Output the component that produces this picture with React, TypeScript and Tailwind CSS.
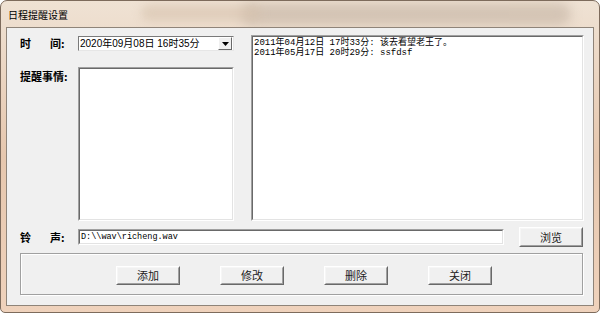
import React from 'react';

const cjk = '"Noto Sans CJK SC", "Liberation Sans", sans-serif';
const mono = '"Liberation Mono", "Noto Sans CJK SC", monospace';

function Sunken({ className, children }: { className: string; children?: React.ReactNode }) {
  return (
    <div className={`border border-t-[#a0a0a0] border-l-[#a0a0a0] border-r-white border-b-white ${className}`}>
      <div className="w-full h-full border border-t-[#696969] border-l-[#696969] border-r-[#e3e3e3] border-b-[#e3e3e3] bg-white overflow-hidden">
        {children}
      </div>
    </div>
  );
}

function Button({ label, className = '' }: { label: string; className?: string }) {
  return (
    <div
      className={`border border-t-white border-l-white border-r-[#696969] border-b-[#696969] ${className}`}
    >
      <div
        className="w-full h-full border border-t-[#f6f6f6] border-l-[#f6f6f6] border-r-[#a0a0a0] border-b-[#a0a0a0] bg-[#f0f0f0] flex items-center justify-center text-[11px] text-[#202020]"
        style={{ fontFamily: cjk }}
      >
        {label}
      </div>
    </div>
  );
}

export default function App() {
  const reminders = ['2011年04月12日 17时33分: 该去看望老王了。', '2011年05月17日 20时29分: ssfdsf'];

  return (
    <div className="w-[600px] h-[313px] overflow-hidden bg-white">
      <div className="relative w-[600px] h-[313px] rounded-t-[7px] rounded-b-[5px] border border-[#7d6b5c] bg-gradient-to-b from-[#efe2d4] via-[#e6c7ae] to-[#efd2bc] flex flex-col overflow-hidden">
        {/* blurred background behind the aero title bar */}
        <div className="absolute left-[240px] top-[2px] w-[330px] h-[22px] bg-[#b9a898] opacity-50 blur-[6px] rounded-full" />
        <div className="absolute left-[140px] top-[4px] w-[120px] h-[16px] bg-[#d6c2ad] opacity-60 blur-[5px] rounded-full" />

        <div className="relative h-[26px] shrink-0 flex items-center pl-[7px]">
          <span className="text-[10px] text-black tracking-[0px]" style={{ fontFamily: cjk }}>
            日程提醒设置
          </span>
        </div>

        <div className="relative mx-[5px] mb-[6px] flex-1 border border-[#8f8479] bg-[#f0f0f0] pl-[13px] pr-[8px] pt-[7px]">
          <div className="flex">
            {/* left column */}
            <div className="flex flex-col">
              <div className="flex items-center mt-[1px] h-[15px]">
                <div
                  className="w-[58px] flex text-[11px] font-bold text-black leading-none"
                  style={{ fontFamily: cjk }}
                >
                  <span className="w-[30px]">时</span>
                  <span>间:</span>
                </div>
                <div className="w-[156px] h-[15px] border border-t-[#7a7a7a] border-l-[#7a7a7a] border-r-[#e6e6e6] border-b-[#e6e6e6] bg-white flex items-center">
                  <span
                    className="flex-1 pl-[1px] text-[10px] text-black leading-none whitespace-pre"
                    style={{ fontFamily: '"Liberation Sans", "Noto Sans CJK SC", sans-serif' }}
                  >
                    2020年09月08日 16时35分
                  </span>
                  <div className="w-[14px] h-[13px] mr-px border border-t-white border-l-white border-r-[#696969] border-b-[#696969] bg-[#f0f0f0] flex items-center justify-center">
                    <svg width="7" height="4" viewBox="0 0 7 4">
                      <path d="M0 0h7L3.5 4z" fill="#000" />
                    </svg>
                  </div>
                </div>
              </div>

              <div className="flex mt-[16px]">
                <div
                  className="w-[58px] pt-[4px] text-[11px] font-bold text-black leading-none"
                  style={{ fontFamily: cjk }}
                >
                  提醒事情:
                </div>
                <Sunken className="w-[156px] h-[154px]" />
              </div>
            </div>

            {/* reminder list */}
            <Sunken className="ml-[17px] w-[333px] h-[186px]">
              <div className="pl-[1px] pt-[1px] text-[9px] leading-[10px] text-black" style={{ fontFamily: mono }}>
                {reminders.map((r) => (
                  <div key={r} className="whitespace-pre">
                    {r}
                  </div>
                ))}
              </div>
            </Sunken>
          </div>

          {/* sound row */}
          <div className="flex items-center mt-[6px] h-[20px]">
            <div className="w-[58px] flex text-[11px] font-bold text-black leading-none" style={{ fontFamily: cjk }}>
              <span className="w-[30px]">铃</span>
              <span>声:</span>
            </div>
            <Sunken className="w-[426px] h-[16px]">
              <div className="pl-[1px] text-[8.5px] leading-[12px] text-black" style={{ fontFamily: mono }}>
                D:\\wav\richeng.wav
              </div>
            </Sunken>
            <Button label="浏览" className="ml-[15px] w-[64px] h-[20px]" />
          </div>

          {/* button group */}
          <div className="mt-[6px] w-[563px] h-[42px] border border-[#a0a0a0] shadow-[inset_1px_1px_0_#ffffff,1px_1px_0_#ffffff] flex items-center gap-[40px] pl-[95px] pt-[3px]">
            <Button label="添加" className="w-[64px] h-[19px]" />
            <Button label="修改" className="w-[64px] h-[19px]" />
            <Button label="删除" className="w-[64px] h-[19px]" />
            <Button label="关闭" className="w-[64px] h-[19px]" />
          </div>
        </div>
      </div>
    </div>
  );
}
